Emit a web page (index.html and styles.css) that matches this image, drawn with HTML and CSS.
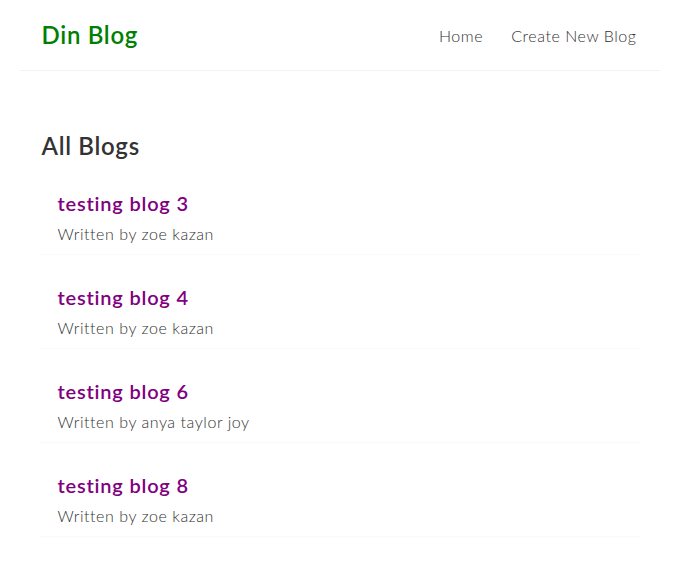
FILE: index.html
```html
<!DOCTYPE html>
<html lang="en">
<head>
<meta charset="utf-8">
<title>Din Blog</title>
<link rel="stylesheet" href="styles.css">
</head>
<body>
<nav class="navbar">
  <h1 class="brand">Din Blog</h1>
  <div class="links">
    <a href="#">Home</a>
    <a href="#">Create New Blog</a>
  </div>
</nav>
<main class="content">
  <h2 class="page-title">All Blogs</h2>
  <div class="blog-preview">
    <h2 class="blog-title">testing blog 3</h2>
    <p class="blog-author">Written by zoe kazan</p>
  </div>
  <div class="blog-preview">
    <h2 class="blog-title">testing blog 4</h2>
    <p class="blog-author">Written by zoe kazan</p>
  </div>
  <div class="blog-preview">
    <h2 class="blog-title">testing blog 6</h2>
    <p class="blog-author">Written by anya taylor joy</p>
  </div>
  <div class="blog-preview">
    <h2 class="blog-title">testing blog 8</h2>
    <p class="blog-author">Written by zoe kazan</p>
  </div>
</main>
</body>
</html>
```
FILE: styles.css
```css
* {
  margin: 0;
  font-family: "Lato", "Open Sans", sans-serif;
  color: #333;
}
body {
  background: #fff;
}
.navbar {
  padding: 20px;
  display: flex;
  align-items: center;
  max-width: 600px;
  margin: 0 auto;
  border-bottom: 1px solid #f2f2f2;
}
.brand {
  font-size: 24px;
  line-height: 30px;
  font-weight: 600;
  letter-spacing: 0.7px;
  padding-left: 2px;
  color: #008000;
}
.links {
  margin-left: auto;
}
.links a {
  margin-left: 15px;
  text-decoration: none;
  padding: 6px 3px 6px 6px;
  font-size: 16px;
  font-weight: 300;
  letter-spacing: 0.55px;
  color: #333;
}
.content {
  max-width: 600px;
  margin: 40px auto;
  padding: 20px;
}
.page-title {
  font-size: 24px;
  line-height: 30px;
  font-weight: 600;
  letter-spacing: 0.7px;
  padding-left: 2px;
}
.blog-preview {
  padding: 10px 16px;
  margin: 20px 0;
  border-bottom: 1px solid #fafafa;
}
.blog-title {
  font-size: 20px;
  line-height: 25px;
  font-weight: 600;
  letter-spacing: 0.8px;
  padding-left: 2px;
  color: #800080;
  margin-bottom: 8px;
}
.blog-author {
  font-size: 16px;
  line-height: 20px;
  font-weight: 300;
  letter-spacing: 0.55px;
  padding-left: 2px;
}
```
